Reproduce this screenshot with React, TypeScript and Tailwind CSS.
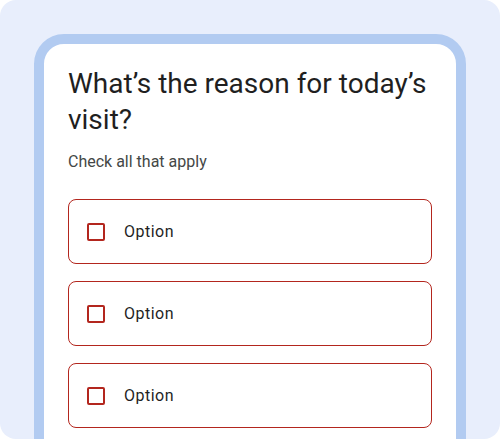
const options = ["Option", "Option", "Option"];

const OptionRow: React.FC<{ label: string }> = ({ label }) => {
  return (
    <label className="flex h-[65px] items-center rounded-lg border border-[#b3261e] pl-[18px]">
      <span className="block h-[18px] w-[18px] rounded-[2px] border-2 border-[#b3261e]" />
      <span className="ml-[19px] text-base tracking-[0.5px] text-[#1f1f1f]">{label}</span>
    </label>
  );
};

export default function App() {
  return (
    <div className="h-[440px] w-[500px] bg-white" style={{ fontFamily: "Roboto, 'Liberation Sans', sans-serif" }}>
      <div className="h-[439px] overflow-hidden rounded-2xl bg-[#e8eefc] px-[34px] pt-[34px]">
        <div className="h-[520px] rounded-[30px] border-[10px] border-[#b2cbf1] bg-white px-6 pt-[22px]">
          <h1 className="text-[28px] leading-9 text-[#1f1f1f]">What’s the reason for today’s visit?</h1>
          <p className="mt-3 text-base leading-6 text-[#444746]">Check all that apply</p>
          <div className="mt-[25px] flex flex-col gap-[17px]">
            {options.map((o, i) => (
              <OptionRow key={i} label={o} />
            ))}
          </div>
        </div>
      </div>
    </div>
  );
}
